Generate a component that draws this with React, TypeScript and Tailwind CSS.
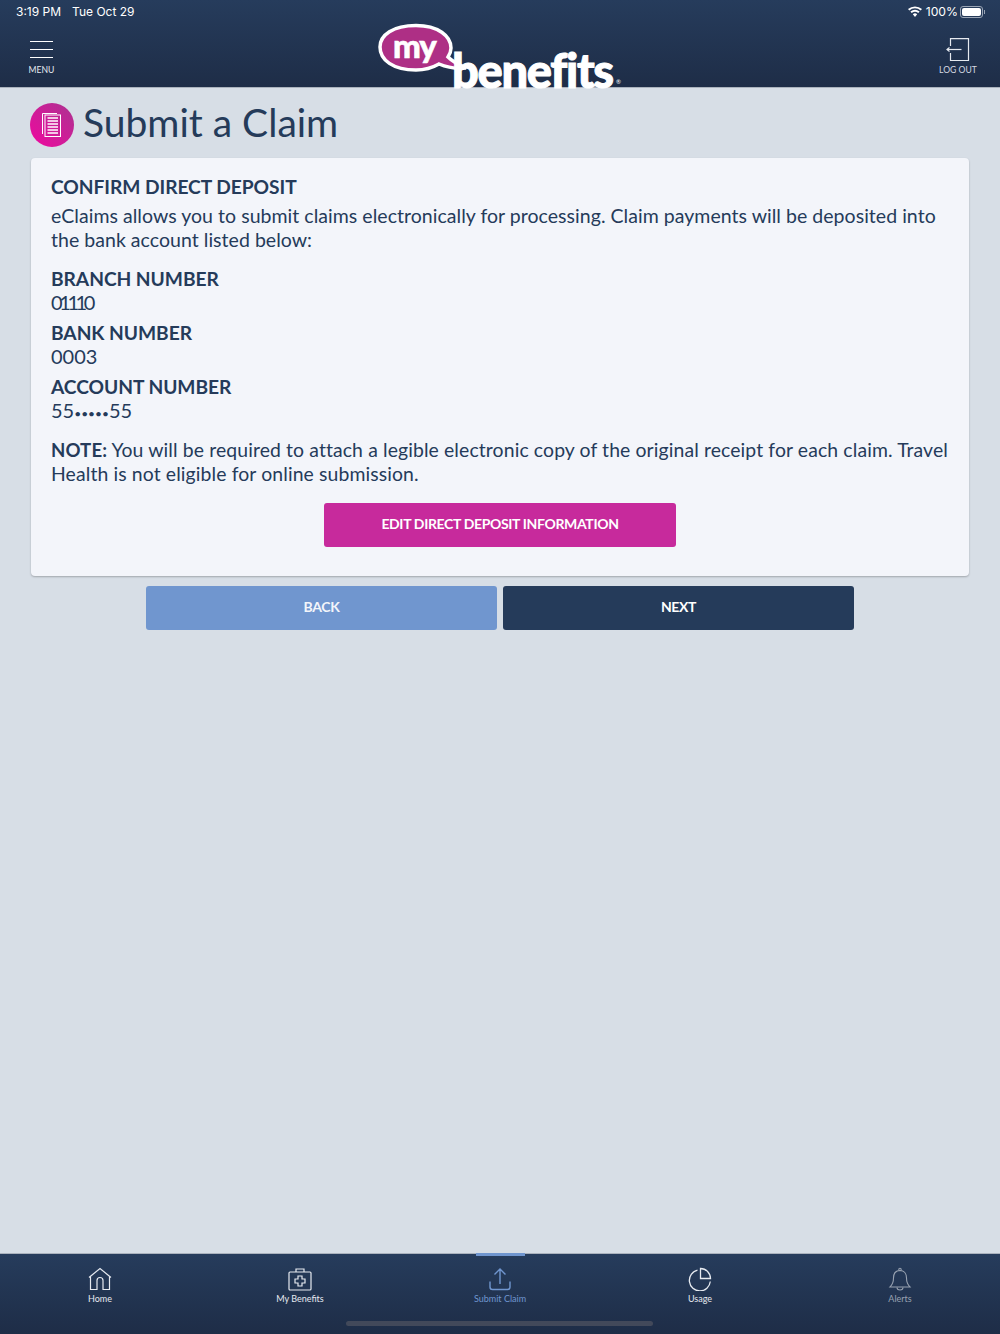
import { useId } from 'react'

const font = { fontFamily: 'Lato, "Open Sans", sans-serif' }

function Logo() {
  return (
    <div className="relative h-[87px] w-[250px]">
      <svg className="absolute left-0 top-0" width="250" height="87" viewBox="0 0 250 87">
        <path
          d="M38 25.500 C60 25.500 73 36 73 48 C73 51 72 54 70 57 C75 62 81 65 88 68 C78 69 68 67 61 64 C54 68 46 70 38 70 C15 70 2 60 2 47 C2 35 15 25.500 38 25.500 Z"
          fill="#ae2f85"
          stroke="#fff"
          strokeWidth="3.500"
        />
      </svg>
      <span className="absolute left-[15px] top-[23px] text-[33px] leading-[44px] font-black tracking-[-1px] text-white [-webkit-text-stroke:0.6px_white]">my</span>
      <span className="absolute left-[74px] top-[40px] text-[47px] leading-[60px] font-black tracking-[-1.3px] text-white [-webkit-text-stroke:1px_white]">benefits</span>
      <span className="absolute left-[238px] top-[78px] text-[6px] leading-[8px] text-white">®</span>
    </div>
  )
}

function HomeIcon() {
  return (
    <svg width="24" height="24" viewBox="0 0 24 24" fill="none" stroke="currentColor" strokeWidth="1.2">
      <path d="M1 10.500 12 1.500l11 9" />
      <path d="M2.500 9.500V22.500H9V13.500a3 3 0 0 1 6 0V22.500H21.500V9.500" />
    </svg>
  )
}

function KitIcon() {
  return (
    <svg width="24" height="24" viewBox="0 0 24 24" fill="none" stroke="currentColor" strokeWidth="1.2">
      <rect x="1" y="5" width="22" height="18" rx="1" />
      <path d="M8 5V2h8v3" />
      <path d="M10 9h4v3h3v4h-3v3h-4v-3H7v-4h3z" />
    </svg>
  )
}

function UploadIcon() {
  return (
    <svg width="24" height="24" viewBox="0 0 24 24" fill="none" stroke="currentColor" strokeWidth="1.4">
      <path d="M12 17V2M6.500 7.500 12 2l5.500 5.500" />
      <path d="M2 14.500V20a2.500 2.500 0 0 0 2.500 2.500h15A2.500 2.500 0 0 0 22 20v-5.500" />
    </svg>
  )
}

function PieIcon() {
  return (
    <svg width="24" height="24" viewBox="0 0 24 24" fill="none" stroke="currentColor" strokeWidth="1.3">
      <path d="M9.500 3.200A10.500 10.500 0 1 0 22.300 14.500" />
      <path d="M12.500 1.500a10 10 0 0 1 10 10h-10z" />
    </svg>
  )
}

function BellIcon() {
  return (
    <svg width="24" height="24" viewBox="0 0 24 24" fill="none" stroke="currentColor" strokeWidth="1.1">
      <path d="M12 3.500c-4.500 0-6.500 3.500-6.500 7.500 0 4-1 6.500-3.500 9h20c-2.500-2.500-3.500-5-3.500-9 0-4-2-7.500-6.500-7.500z" />
      <circle cx="12" cy="2.500" r="1.200" />
      <path d="M9 20.500a3 2.500 0 0 0 6 0" />
    </svg>
  )
}

function ClaimBadge() {
  const id = useId()
  return (
    <svg width="44" height="44" viewBox="0 0 44 44">
      <defs>
        <linearGradient id={id} x1="0" y1="1" x2="1" y2="0">
          <stop offset="0" stopColor="#f0089f" />
          <stop offset="1" stopColor="#ab3390" />
        </linearGradient>
      </defs>
      <circle cx="22" cy="22" r="22" fill={`url(#${id})`} />
      <g fill="none" stroke="#fff" strokeWidth="1">
        <path d="M12.500 31V10.500H27" />
        <rect x="15" y="12" width="15.500" height="21.500" />
      </g>
      <path d="M17.500 15h10.500M17.500 18h10.500M17.500 21h10.500M17.500 24h10.500M17.500 27h10.500M17.500 30h10.500" stroke="#fff" strokeWidth="1.500" />
    </svg>
  )
}

const tabs = [
  { label: 'Home', icon: <HomeIcon />, color: 'text-[#e6eaf0]' },
  { label: 'My Benefits', icon: <KitIcon />, color: 'text-[#e6eaf0]' },
  { label: 'Submit Claim', icon: <UploadIcon />, color: 'text-[#7096cf]', active: true },
  { label: 'Usage', icon: <PieIcon />, color: 'text-[#e6eaf0]' },
  { label: 'Alerts', icon: <BellIcon />, color: 'text-[#98a2b1]' },
]

export default function App() {
  return (
    <div className="flex h-[1334px] w-[1000px] flex-col overflow-hidden bg-[#d7dee6] text-[#253b5a]" style={font}>
      <header className="relative h-[88px] shrink-0 border-b border-[#aab2bd] bg-gradient-to-b from-[#263c5c] to-[#1e2d47] text-white">
        <div className="flex h-[24px] items-center justify-between pl-4 pr-[15px] font-[Inter] text-[12px]">
          <div className="flex gap-[11px]">
            <span>3:19 PM</span>
            <span>Tue Oct 29</span>
          </div>
          <div className="flex items-center gap-[3px]">
            <svg width="14" height="11" viewBox="0 0 14 11" fill="#fff">
              <path d="M7 11 4.800 8.300a3.400 3.400 0 0 1 4.400 0zM3.700 7.100 2.400 5.600a7.200 7.200 0 0 1 9.200 0l-1.300 1.500a5.200 5.200 0 0 0-6.600 0zM1.300 4.400 0 3a10.800 10.800 0 0 1 14 0l-1.300 1.400a8.800 8.800 0 0 0-11.400 0z" />
            </svg>
            <span className="ml-[1px] text-[12.2px]">100%</span>
            <div className="-ml-[1px] flex items-center">
              <div className="h-[12px] w-[23px] rounded-[3px] border border-[#9aa5b5] p-[1px]">
                <div className="h-full w-full rounded-[2px] bg-white" />
              </div>
              <div className="ml-[1px] h-[4px] w-[1px] bg-[#9aa5b5]" />
            </div>
          </div>
        </div>
        <div className="flex h-[63px] items-start justify-between pl-[29px] pr-[23px]">
          <button className="flex w-[25px] flex-col items-center pt-[17px]">
            <span className="mb-[7px] h-[1px] w-[23px] bg-white" />
            <span className="mb-[7px] h-[1px] w-[23px] bg-white" />
            <span className="h-[1px] w-[23px] bg-white" />
            <span className="mt-[7px] text-[8.6px] leading-[11px] whitespace-nowrap text-[#e6eaf0]">MENU</span>
          </button>
          <button className="flex w-[38px] flex-col items-center pt-[14px]">
            <svg width="24" height="24" viewBox="0 0 24 24" fill="none" stroke="#e6eaf0" strokeWidth="1.200">
              <path d="M4.500 8V.6H22.500V22.500H4.500V15" />
              <path d="M1 11.500H15.500" />
              <path d="M3.500 9.500 1 11.500l2.500 2" />
            </svg>
            <span className="mt-[3px] text-[8.6px] leading-[11px] whitespace-nowrap text-[#d5dae2]">LOG OUT</span>
          </button>
        </div>
        <div className="absolute left-[378px] top-0">
          <Logo />
        </div>
      </header>

      <main className="flex-1 px-[30px] pt-[15px]">
        <div className="flex items-center gap-[9px]">
          <ClaimBadge />
          <h1 className="pb-[6px] text-[39px] leading-[38px] font-normal">Submit a Claim</h1>
        </div>

        <section className="mx-[1px] mt-[11px] h-[418px] rounded-[4px] bg-[#f3f5fa] px-[20px] pt-[17px] shadow-[0_1px_2px_rgba(0,0,0,0.25)]">
          <h2 className="text-[19.2px] leading-[24px] font-bold tracking-[-0.05px]">CONFIRM DIRECT DEPOSIT</h2>
          <p className="mt-[5px] text-[19.5px] leading-[24px] tracking-[0.035px]">
            eClaims allows you to submit claims electronically for processing. Claim payments will be deposited into the bank account listed below:
          </p>
          <div className="mt-[15px] flex flex-col gap-[7px] text-[20px] leading-[23px]">
            <div>
              <div className="text-[19.2px] leading-[24px] font-bold tracking-[-0.05px]">BRANCH NUMBER</div>
              <div className="tracking-[-3.4px]">01110</div>
            </div>
            <div>
              <div className="text-[19.2px] leading-[24px] font-bold tracking-[-0.05px]">BANK NUMBER</div>
              <div>0003</div>
            </div>
            <div>
              <div className="text-[19.2px] leading-[24px] font-bold tracking-[-0.05px]">ACCOUNT NUMBER</div>
              <div>
                55<span className="text-[12px]">•••••</span>55
              </div>
            </div>
          </div>
          <p className="mt-[13px] text-[19.4px] leading-[24px] tracking-[0.11px]">
            <b className="text-[18.6px] font-bold">NOTE:</b> You will be required to attach a legible electronic copy of the original receipt for each claim. Travel Health is not eligible for online submission.
          </p>
          <div className="mt-[17px] flex justify-center">
            <button className="h-[44px] w-[352px] rounded-[3px] bg-[#c72a9c] pb-[3px] text-[14px] font-bold tracking-[-0.35px] text-white">EDIT DIRECT DEPOSIT INFORMATION</button>
          </div>
        </section>

        <div className="mt-[10px] flex justify-center gap-[6px]">
          <button className="h-[44px] w-[351px] rounded-[3px] bg-[#7096cf] pb-[3px] text-[14px] font-bold tracking-[-0.35px] text-[#f3f5fa]">BACK</button>
          <button className="h-[44px] w-[351px] rounded-[3px] bg-[#253b5a] pb-[3px] text-[14px] font-bold tracking-[-0.35px] text-white">NEXT</button>
        </div>
      </main>

      <nav className="relative h-[81px] shrink-0 border-t border-[#aab2bd] bg-gradient-to-b from-[#263c5c] to-[#1e2d47]">
        <div className="grid grid-cols-5 pt-[13px]">
          {tabs.map(t => (
            <div key={t.label} className={`relative flex flex-col items-center ${t.color}`}>
              {t.active && <span className="absolute top-[-14px] h-[3px] w-[49px] bg-[#7096cf]" />}
              <div className="h-[24px]">{t.icon}</div>
              <span className="mt-[2px] text-[9px] leading-[12px]">{t.label}</span>
            </div>
          ))}
        </div>
        <div className="absolute bottom-[8px] left-[346px] h-[5px] w-[307px] rounded-full bg-[#42495a]" />
      </nav>
    </div>
  )
}
